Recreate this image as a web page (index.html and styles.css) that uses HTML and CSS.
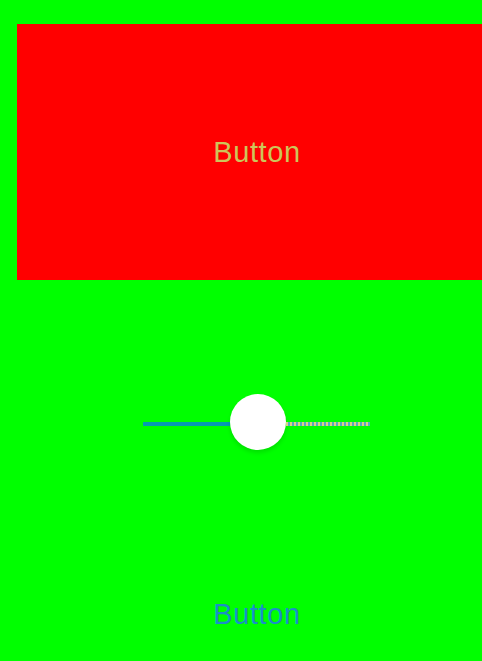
FILE: index.html
```html
<!DOCTYPE html>
<html>
<head>
<meta charset="utf-8">
<link rel="stylesheet" href="styles.css">
</head>
<body>
<div class="screen">
  <div class="red-button"><span class="label label-light">Button</span></div>
  <div class="slider">
    <div class="track track-min"></div>
    <div class="thumb"></div>
    <div class="track track-max"></div>
  </div>
  <div class="plain-button"><span class="label label-blue">Button</span></div>
</div>
</body>
</html>
```

FILE: styles.css
```css
html, body {
  margin: 0;
  padding: 0;
  overflow: hidden;
  background: #00ff00;
}
.screen {
  width: 482px;
  height: 661px;
  display: flex;
  flex-direction: column;
  font-family: "Liberation Sans", Arial, sans-serif;
}
.red-button {
  margin: 24px 0 0 17px;
  padding-left: 15px;
  height: 256px;
  background: #ff0000;
  display: flex;
  align-items: center;
  justify-content: center;
}
.label {
  font-size: 29px;
  line-height: 34px;
  letter-spacing: 0.6px;
}
.label-light {
  color: #cdc55a;
}
.label-blue {
  color: #1a8fc8;
}
.slider {
  margin: 114px 0 0 143px;
  width: 227px;
  height: 56px;
  display: flex;
  align-items: flex-start;
}
.track {
  margin-top: 28px;
  height: 4px;
}
.track-min {
  width: 87px;
  background: #0699b4;
}
.track-max {
  width: 84px;
  background: repeating-linear-gradient(90deg, #dccf86 0 2px, #5aa6c4 2px 4px);
}
.thumb {
  width: 56px;
  height: 56px;
  border-radius: 50%;
  background: #ffffff;
  box-shadow: 0 3px 4px rgba(0, 0, 0, 0.12);
  flex: none;
}
.plain-button {
  margin-top: 147px;
  padding-left: 32px;
  display: flex;
  justify-content: center;
}
```
